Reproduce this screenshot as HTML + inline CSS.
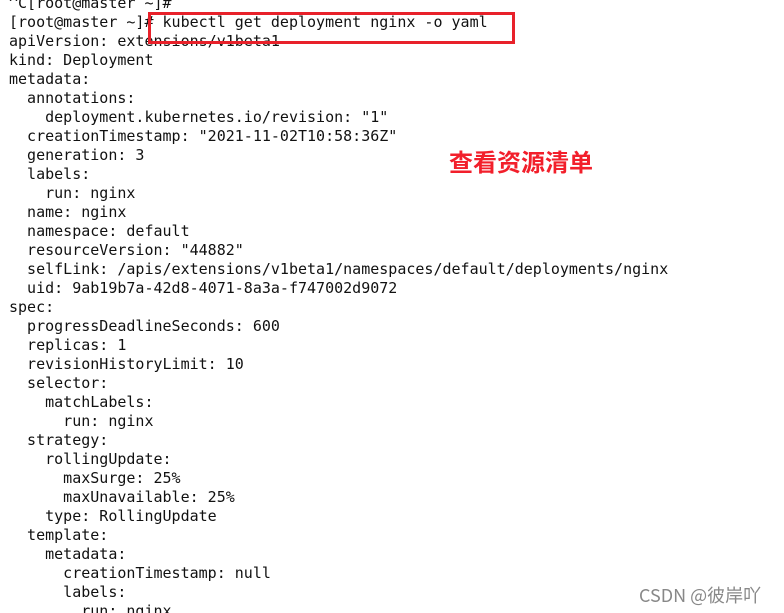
<!DOCTYPE html>
<html><head><meta charset="utf-8"><style>
html,body{margin:0;padding:0;background:#fff;width:784px;height:613px;overflow:hidden;position:relative}
pre{position:absolute;left:9px;top:-6px;margin:0;font-family:"DejaVu Sans Mono","Liberation Mono",monospace;font-size:15px;line-height:19px;color:#111}
.box{position:absolute;left:148px;top:12px;width:361px;height:26px;border:3px solid #e8212a}
.tag{position:absolute;left:449px;top:146px;font-family:"Noto Sans CJK SC",sans-serif;font-weight:bold;font-size:24px;line-height:30px;color:#f21f2b}
.wm{position:absolute;left:639px;top:582px;font-family:"Noto Sans CJK SC",sans-serif;font-size:18px;line-height:26px;color:#888}
</style></head><body>
<pre>^C[root@master ~]#
[root@master ~]# kubectl get deployment nginx -o yaml
apiVersion: extensions/v1beta1
kind: Deployment
metadata:
  annotations:
    deployment.kubernetes.io/revision: "1"
  creationTimestamp: "2021-11-02T10:58:36Z"
  generation: 3
  labels:
    run: nginx
  name: nginx
  namespace: default
  resourceVersion: "44882"
  selfLink: /apis/extensions/v1beta1/namespaces/default/deployments/nginx
  uid: 9ab19b7a-42d8-4071-8a3a-f747002d9072
spec:
  progressDeadlineSeconds: 600
  replicas: 1
  revisionHistoryLimit: 10
  selector:
    matchLabels:
      run: nginx
  strategy:
    rollingUpdate:
      maxSurge: 25%
      maxUnavailable: 25%
    type: RollingUpdate
  template:
    metadata:
      creationTimestamp: null
      labels:
        run: nginx</pre>
<div class="box"></div>
<div class="tag">查看资源清单</div>
<div class="wm">CSDN @彼岸吖</div>
</body></html>
